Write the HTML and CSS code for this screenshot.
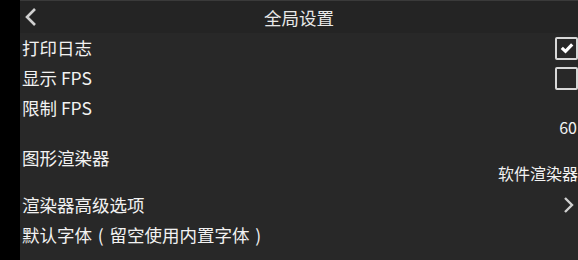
FILE: index.html
```html
<!DOCTYPE html>
<html lang="zh">
<head>
    <meta charset="UTF-8">
    <meta name="viewport" content="width=device-width, initial-scale=1.0">
    <title>全局设置</title>
    <link rel="stylesheet" href="styles.css">
</head>
<body>
    <div class="side"></div>
    <div class="panel">
        <div class="header">
            <span class="back">
                <svg width="14" height="20" viewBox="0 0 14 20"><path d="M11 2 L3 10 L11 18" fill="none" stroke="#d0d0d0" stroke-width="2.6"/></svg>
            </span>
            <h2>全局设置</h2>
        </div>

        <div class="row">
            <span class="label">打印日志</span>
            <span class="check on">
                <svg width="14" height="12" viewBox="0 0 14 12"><path d="M1.8 5.8 L5.5 9.3 L12.2 2.4" fill="none" stroke="#fff" stroke-width="3.2"/></svg>
            </span>
        </div>
        <div class="row">
            <span class="label">显示 FPS</span>
            <span class="check"></span>
        </div>
        <div class="row tall">
            <span class="label">限制 FPS</span>
            <span class="value num">60</span>
        </div>
        <div class="row tall2">
            <span class="label">图形渲染器</span>
            <span class="value">软件渲染器</span>
        </div>
        <div class="row">
            <span class="label">渲染器高级选项</span>
            <span class="next">
                <svg width="12" height="18" viewBox="0 0 12 18"><path d="M3 2 L10 9 L3 16" fill="none" stroke="#d0d0d0" stroke-width="2.4"/></svg>
            </span>
        </div>
        <div class="row">
            <span class="label">默认字体<span class="paren">(</span>留空使用内置字体<span class="paren">)</span></span>
        </div>
    </div>
</body>
</html>
```

FILE: styles.css
```css
body {
    margin: 0;
    padding: 0;
    display: flex;
    height: 260px;
    overflow: hidden;
    background-color: #000;
    font-family: "Noto Sans CJK SC", "Noto Sans", sans-serif;
    color: #f2f2f2;
}

.side {
    width: 20px;
    flex: none;
    background-color: #000;
}

.panel {
    flex: 1;
    background-color: #282828;
    display: flex;
    flex-direction: column;
}

.header {
    height: 33px;
    box-sizing: border-box;
    border-top: 1px solid #3a3a3a;
    background-color: #242424;
    position: relative;
    display: flex;
    align-items: center;
    justify-content: center;
}

.header h2 {
    margin: 0;
    font-size: 17.5px;
    font-weight: normal;
    color: #e8e8e8;
}

.back {
    position: absolute;
    left: 4px;
    top: 6px;
}

.row {
    height: 30px;
    display: flex;
    justify-content: space-between;
    align-items: center;
    padding-left: 2px;
}

.row.tall {
    height: 50px;
    align-items: flex-start;
}

.row.tall2 {
    height: 47px;
    align-items: flex-start;
}

.label {
    font-size: 17.5px;
    line-height: 30px;
}

.paren {
    display: inline-block;
    width: 1em;
    text-align: center;
}

.value {
    font-size: 16px;
    align-self: flex-end;
    line-height: 20px;
    padding-bottom: 7px;
}

.value.num {
    padding-bottom: 6px;
    padding-right: 1px;
}

.check {
    width: 19px;
    height: 19px;
    border: 2px solid #d8d8d8;
    border-radius: 2px;
    display: flex;
    align-items: center;
    justify-content: center;
}

.next {
    margin-right: 4px;
    display: flex;
}
```
